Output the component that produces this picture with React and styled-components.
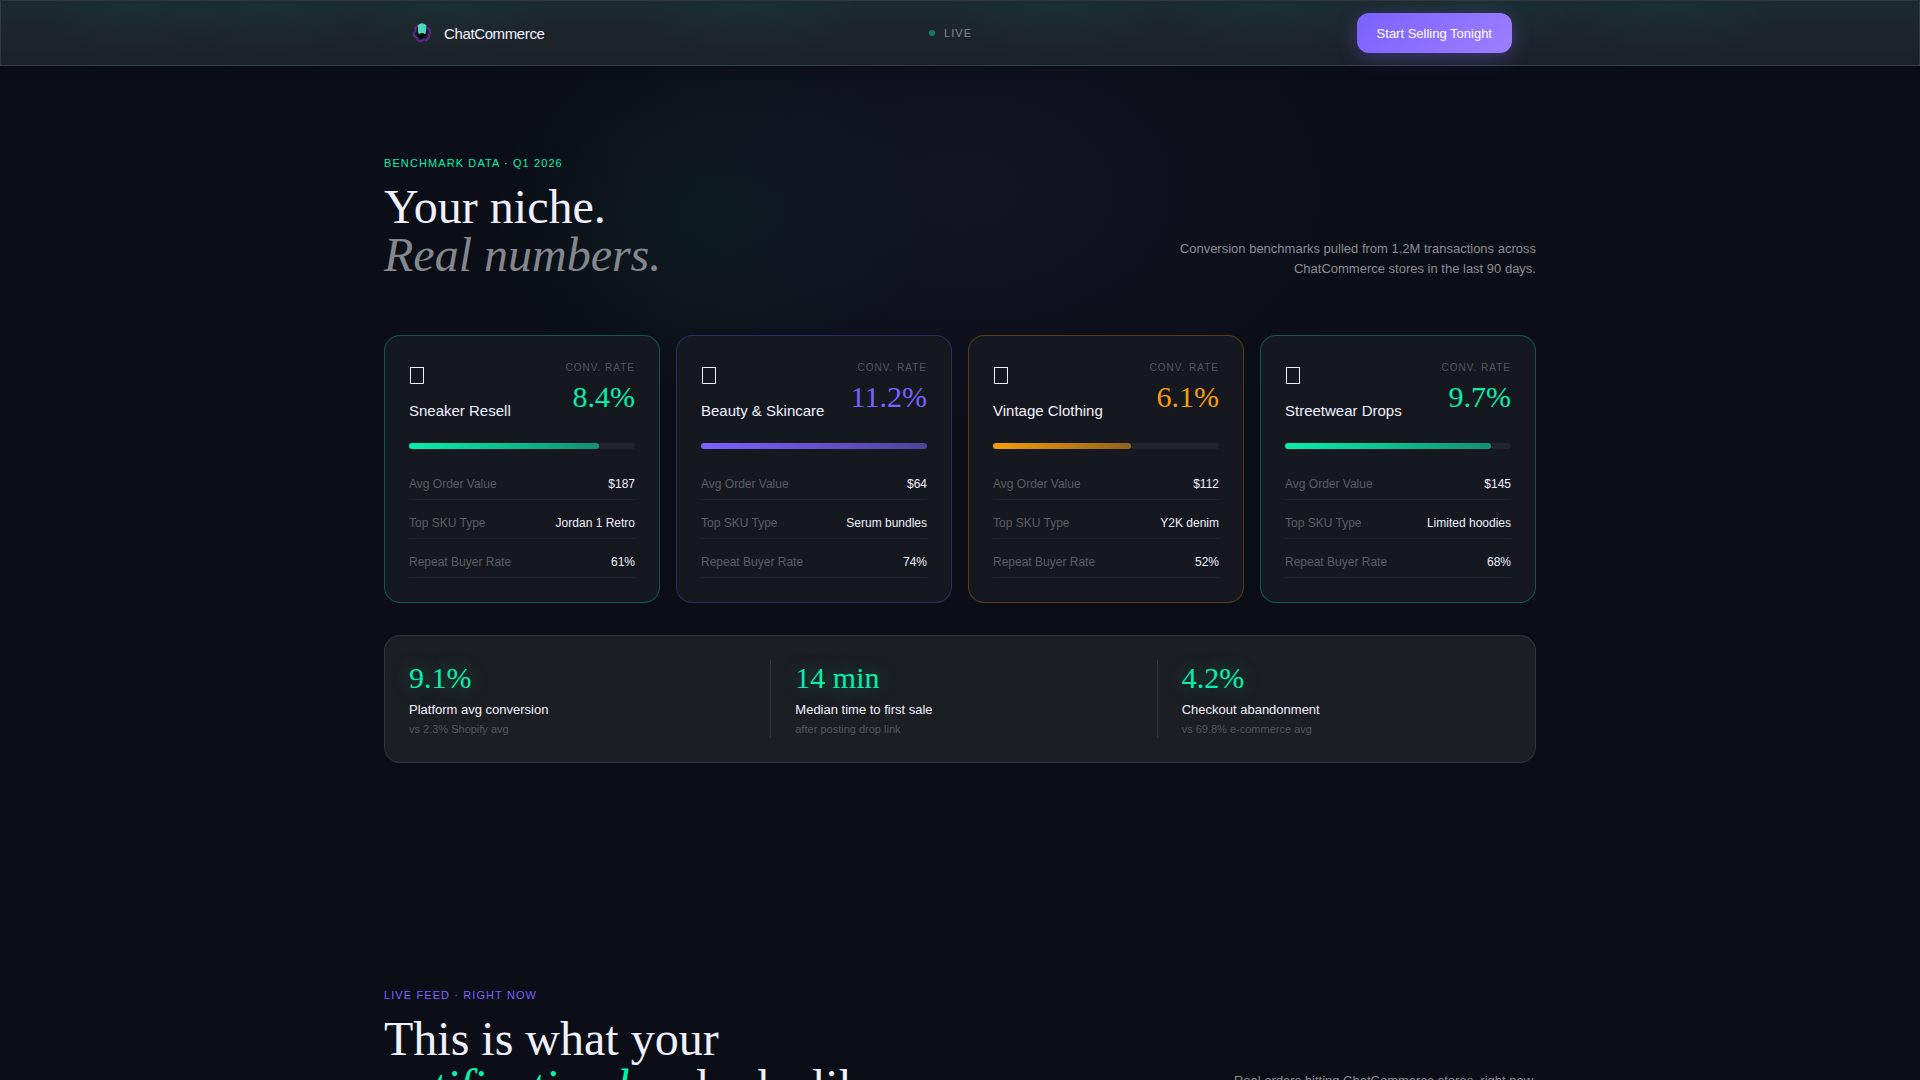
import styled, { createGlobalStyle } from 'styled-components';

const GlobalStyle = createGlobalStyle`
    *, *::before {
        box-sizing: border-box;
    }
    body {
        margin: 0;
        background: #0b0e16;
        color: #f0f0ff;
        font-family: "Liberation Sans", Arial, sans-serif;
    }
    h1, h2, h3, p, dl, dt, dd {
        margin: 0;
        font-weight: 400;
    }
`;

const accents = {
    mint: { main: '#06efae', fade: '#14906f', border: 'rgba(6, 239, 174, 0.3)' },
    violet: { main: '#7b61ff', fade: '#50449b', border: 'rgba(123, 97, 255, 0.28)' },
    amber: { main: '#f59e0b', fade: '#91621c', border: 'rgba(245, 158, 11, 0.28)' },
};

const niches = [
    { name: 'Sneaker Resell', rate: '8.4%', fill: 84, accent: 'mint', order: '$187', sku: 'Jordan 1 Retro', repeat: '61%' },
    { name: 'Beauty & Skincare', rate: '11.2%', fill: 100, accent: 'violet', order: '$64', sku: 'Serum bundles', repeat: '74%' },
    { name: 'Vintage Clothing', rate: '6.1%', fill: 61, accent: 'amber', order: '$112', sku: 'Y2K denim', repeat: '52%' },
    { name: 'Streetwear Drops', rate: '9.7%', fill: 91, accent: 'mint', order: '$145', sku: 'Limited hoodies', repeat: '68%' },
];

const totals = [
    { value: '9.1%', label: 'Platform avg conversion', note: 'vs 2.3% Shopify avg' },
    { value: '14 min', label: 'Median time to first sale', note: 'after posting drop link' },
    { value: '4.2%', label: 'Checkout abandonment', note: 'vs 69.8% e-commerce avg' },
];

const Page = styled.div`
    height: 100vh;
    overflow: hidden;
    background:
        radial-gradient(ellipse 220px 180px at 37% 215px, rgba(16, 236, 168, 0.05), transparent),
        radial-gradient(ellipse 440px 280px at 50% 190px, rgba(123, 97, 255, 0.06), transparent),
        #0b0e16;
`;

const Header = styled.header`
    border: 1px solid rgba(255, 255, 255, 0.1);
    background:
        radial-gradient(ellipse 90px 60px at 7% 0, rgba(16, 236, 168, 0.03), transparent),
        radial-gradient(ellipse 100px 60px at 14% 0, rgba(16, 236, 168, 0.03), transparent),
        radial-gradient(ellipse 110px 60px at 23% 0, rgba(16, 236, 168, 0.03), transparent),
        radial-gradient(ellipse 110px 60px at 39% 0, rgba(16, 236, 168, 0.03), transparent),
        radial-gradient(ellipse 110px 60px at 55% 0, rgba(16, 236, 168, 0.03), transparent),
        radial-gradient(ellipse 110px 60px at 66% 0, rgba(16, 236, 168, 0.03), transparent),
        radial-gradient(ellipse 110px 60px at 77% 0, rgba(16, 236, 168, 0.03), transparent),
        radial-gradient(ellipse 110px 60px at 87% 0, rgba(16, 236, 168, 0.03), transparent),
        linear-gradient(#1b2a2e, #1d2028);
    box-shadow: 0 2px 12px rgba(0, 0, 0, 0.15);
`;

const Nav = styled.nav`
    display: flex;
    align-items: center;
    justify-content: space-between;
    max-width: 1152px;
    margin: 0 auto;
    padding: 12px 24px;
`;

const Brand = styled.a`
    display: flex;
    align-items: center;
    gap: 8px;
    color: #f0f0ff;
    font-size: 15px;
    letter-spacing: -0.025em;
    text-decoration: none;
`;

const Live = styled.div`
    display: flex;
    align-items: center;
    gap: 9px;
    color: #85888d;
    font-size: 11px;
    letter-spacing: 0.1em;
    &::before {
        content: "";
        width: 6px;
        height: 6px;
        border-radius: 50%;
        background: #15805f;
    }
`;

const CtaButton = styled.button`
    height: 40px;
    padding: 0 20px;
    border: 0;
    border-radius: 12px;
    background: linear-gradient(135deg, #7b61ff, #9b80ff);
    box-shadow: 0 4px 20px rgba(123, 97, 255, 0.35);
    color: #fff;
    font-family: inherit;
    font-size: 13px;
    cursor: pointer;
`;

const Main = styled.main`
    display: flex;
    flex-direction: column;
    gap: 224px;
    max-width: 1200px;
    margin: 0 auto;
    padding: 89px 24px 112px;
`;

const SectionHead = styled.div`
    display: flex;
    align-items: flex-end;
    justify-content: space-between;
    gap: 24px;
`;

const Eyebrow = styled.p`
    margin-bottom: 12px;
    color: ${({ $accent }) => accents[$accent].main};
    font-size: 11px;
    line-height: 16px;
    letter-spacing: 0.1em;
    text-transform: uppercase;
`;

const Title = styled.h2`
    font-family: "Liberation Serif", "Times New Roman", serif;
    font-size: 48px;
    line-height: 48px;
    em {
        color: ${({ $em }) => $em};
    }
`;

const Intro = styled.p`
    max-width: 360px;
    min-height: 40px;
    color: #8a8c93;
    font-size: 13px;
    line-height: 20px;
    text-align: right;
`;

const CardGrid = styled.div`
    display: grid;
    grid-template-columns: repeat(4, 1fr);
    gap: 16px;
    margin-top: 56px;
    @media (max-width: 992px) {
        grid-template-columns: repeat(2, 1fr);
    }
`;

const Card = styled.article`
    padding: 24px;
    border: 1px solid ${({ $accent }) => accents[$accent].border};
    border-radius: 16px;
    background: #15181f;
`;

const CardTop = styled.div`
    display: flex;
    justify-content: space-between;
    margin-bottom: 21px;
`;

const Icon = styled.div`
    height: 39px;
    padding: 7px 1px;
    &::before {
        content: "";
        display: block;
        width: 14px;
        height: 17px;
        border: 1px solid #f0f0ff;
    }
`;

const Name = styled.h3`
    font-size: 15px;
    line-height: 23px;
`;

const Rate = styled.div`
    text-align: right;
    span {
        display: block;
        margin-bottom: 6px;
        color: #55575d;
        font-size: 10px;
        line-height: 15px;
        letter-spacing: 1px;
    }
    strong {
        display: block;
        color: ${({ $accent }) => accents[$accent].main};
        font-family: "Liberation Serif", "Times New Roman", serif;
        font-size: 30px;
        font-weight: 400;
        line-height: 32px;
    }
`;

const Track = styled.div`
    height: 6px;
    margin-bottom: 20px;
    border-radius: 3px;
    background: #21242b;
`;

const Fill = styled.div`
    height: 100%;
    border-radius: 3px;
    background: linear-gradient(90deg, ${({ $accent }) => accents[$accent].main}, ${({ $accent }) => accents[$accent].fade});
`;

const Facts = styled.dl`
    display: grid;
    gap: 8px;
    font-size: 12px;
    line-height: 18px;
    div {
        display: flex;
        justify-content: space-between;
        padding: 6px 0;
        border-bottom: 1px solid rgba(255, 255, 255, 0.05);
    }
    dt {
        color: #5b5d63;
    }
`;

const Totals = styled.div`
    display: flex;
    gap: 24px;
    margin-top: 32px;
    padding: 24px;
    border: 1px solid rgba(255, 255, 255, 0.1);
    border-radius: 16px;
    background: #1b1e23;
`;

const Total = styled.div`
    flex: 1;
    &:not(:last-child) {
        padding-right: 32px;
        border-right: 1px solid rgba(255, 255, 255, 0.1);
    }
    strong {
        display: block;
        color: #06efae;
        font-family: "Liberation Serif", "Times New Roman", serif;
        font-size: 30px;
        font-weight: 400;
        line-height: 36px;
        text-shadow: 0 0 20px rgba(6, 239, 174, 0.35);
    }
    p {
        margin-top: 4px;
        font-size: 13px;
        line-height: 20px;
    }
    small {
        display: block;
        color: #55575c;
        font-size: 11px;
        line-height: 18px;
    }
`;

function Logo() {
    return (
        <svg width="28" height="28" viewBox="0 0 28 28" aria-hidden="true">
            <circle cx="14" cy="14" r="6" fill="#151226" />
            <g fill="none" stroke="#562b8c" strokeWidth="2" strokeLinecap="round">
                {[0, 60, 120, 180, 240, 300].map((angle) => (
                    <path key={angle} d="M12 7.5 Q15 4.5 18.5 7" transform={`rotate(${angle} 14 14)`} />
                ))}
            </g>
            <circle cx="14" cy="15" r="4" fill="#07070e" />
            <path d="M10 6 Q14 2.5 18 6 V13 L17 15.5 L15 14 H13 L11 15.5 L10 13 Z" fill="#4fd8b8" />
        </svg>
    );
}

function NicheCard({ niche }) {
    return (
        <Card $accent={niche.accent}>
            <CardTop>
                <div>
                    <Icon aria-hidden="true" />
                    <Name>{niche.name}</Name>
                </div>
                <Rate $accent={niche.accent}>
                    <span>CONV. RATE</span>
                    <strong>{niche.rate}</strong>
                </Rate>
            </CardTop>
            <Track>
                <Fill $accent={niche.accent} style={{ width: `${niche.fill}%` }} />
            </Track>
            <Facts>
                <div>
                    <dt>Avg Order Value</dt>
                    <dd>{niche.order}</dd>
                </div>
                <div>
                    <dt>Top SKU Type</dt>
                    <dd>{niche.sku}</dd>
                </div>
                <div>
                    <dt>Repeat Buyer Rate</dt>
                    <dd>{niche.repeat}</dd>
                </div>
            </Facts>
        </Card>
    );
}

export default function App() {
    return (
        <>
            <GlobalStyle />
            <Page>
                <Header>
                    <Nav>
                        <Brand href="#">
                            <Logo />
                            ChatCommerce
                        </Brand>
                        <Live>LIVE</Live>
                        <CtaButton type="button">Start Selling Tonight</CtaButton>
                    </Nav>
                </Header>

                <Main>
                    <section>
                        <SectionHead>
                            <div>
                                <Eyebrow $accent="mint">Benchmark data · Q1 2026</Eyebrow>
                                <Title $em="#85878e">Your niche.<br /><em>Real numbers.</em></Title>
                            </div>
                            <Intro>Conversion benchmarks pulled from 1.2M transactions across ChatCommerce stores in the last 90 days.</Intro>
                        </SectionHead>

                        <CardGrid>
                            {niches.map((niche) => (
                                <NicheCard niche={niche} key={niche.name} />
                            ))}
                        </CardGrid>

                        <Totals>
                            {totals.map((total) => (
                                <Total key={total.label}>
                                    <strong>{total.value}</strong>
                                    <p>{total.label}</p>
                                    <small>{total.note}</small>
                                </Total>
                            ))}
                        </Totals>
                    </section>

                    <section>
                        <SectionHead>
                            <div>
                                <Eyebrow $accent="violet">Live feed · Right now</Eyebrow>
                                <Title $em="#06efae">This is what your<br /><em>notification bar</em> looks like.</Title>
                            </div>
                            <Intro>Real orders hitting ChatCommerce stores, right now.</Intro>
                        </SectionHead>
                    </section>
                </Main>
            </Page>
        </>
    );
}
